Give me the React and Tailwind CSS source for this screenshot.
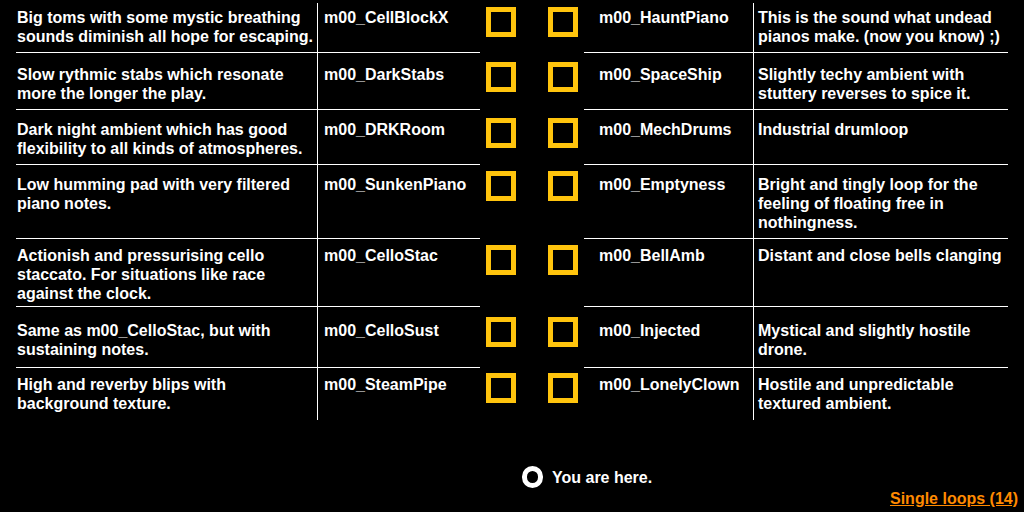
const rows = [
  { h: "h-[50px]", pt: "pt-[5px]", cb: "mt-[4px]", left: "Big toms with some mystic breathing sounds diminish all hope for escaping.", ln: "m00_CellBlockX", rn: "m00_HauntPiano", right: "This is the sound what undead pianos make. (now you know) ;)" },
  { h: "h-[57px]", pt: "pt-[12px]", cb: "mt-[9px]", left: "Slow rythmic stabs which resonate more the longer the play.", ln: "m00_DarkStabs", rn: "m00_SpaceShip", right: "Slightly techy ambient with stuttery reverses to spice it." },
  { h: "h-[55px]", pt: "pt-[10px]", cb: "mt-[8px]", left: "Dark night ambient which has good flexibility to all kinds of atmospheres.", ln: "m00_DRKRoom", rn: "m00_MechDrums", right: "Industrial drumloop" },
  { h: "h-[74px]", pt: "pt-[10px]", cb: "mt-[6px]", left: "Low humming pad with very filtered piano notes.", ln: "m00_SunkenPiano", rn: "m00_Emptyness", right: "Bright and tingly loop for the feeling of floating free in nothingness." },
  { h: "h-[68px]", pt: "pt-[7px]", cb: "mt-[6px]", left: "Actionish and pressurising cello staccato. For situations like race against the clock.", ln: "m00_CelloStac", rn: "m00_BellAmb", right: "Distant and close bells clanging" },
  { h: "h-[61px]", pt: "pt-[14px]", cb: "mt-[10px]", left: "Same as m00_CelloStac, but with sustaining notes.", ln: "m00_CelloSust", rn: "m00_Injected", right: "Mystical and slightly hostile drone." },
  { h: "h-[52px]", pt: "pt-[7px]", cb: "mt-[5px]", left: "High and reverby blips with background texture.", ln: "m00_SteamPipe", rn: "m00_LonelyClown", right: "Hostile and unpredictable textured ambient." },
];

function Box({ mt }) {
  return <div className={`${mt} w-[30px] h-[30px] border-[5px] border-[#ffc40d] cursor-pointer`} />;
}

export default function App() {
  return (
    <div className="w-[1024px] h-[512px] bg-black text-white font-['Liberation_Sans',Arial,sans-serif] font-bold text-[16px] leading-[19px] overflow-hidden">
      {/* loop table */}
      <div className="pt-[3px] pl-4 flex flex-col">
        {rows.map((r, i) => {
          const last = i === rows.length - 1;
          const line = last ? "" : "border-b border-white";
          return (
            <div key={r.ln} className={`flex ${r.h}`}>
              <div className={`w-[302px] pl-[1px] border-r border-white ${r.pt} ${line}`}>{r.left}</div>
              <div className={`w-[162px] pl-[6px] ${r.pt} ${line}`}>{r.ln}</div>
              <div className="w-[104px] flex pl-[6px] gap-[32px]">
                <Box mt={r.cb} />
                <Box mt={r.cb} />
              </div>
              <div className={`w-[169px] pl-[15px] ${r.pt} ${line}`}>{r.rn}</div>
              <div className={`w-[255px] pl-[4px] border-l border-white ${r.pt} ${line}`}>{r.right}</div>
            </div>
          );
        })}
      </div>

      {/* footer */}
      <div className="flex items-center gap-[9px] pl-[522px] mt-[46px]">
        <div className="w-[21px] h-[22px] rounded-full border-[5px] border-white" />
        <span>You are here.</span>
      </div>
      <div className="flex justify-end pr-[6px] mt-[1px]">
        <a href="#" className="text-[#ff8a00] underline">Single loops (14)</a>
      </div>
    </div>
  );
}
